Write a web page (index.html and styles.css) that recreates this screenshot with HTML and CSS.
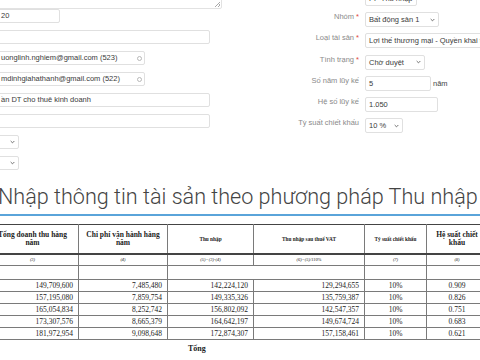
FILE: index.html
```html
<!DOCTYPE html>
<html lang="vi">
<head>
<meta charset="utf-8">
<title>Thu nhập</title>
<link rel="stylesheet" href="styles.css">
</head>
<body>
<div class="page">
  <div class="form">
    <div class="col-left">
      <div class="ta"><span class="grip"></span></div>
      <div class="fields">
        <div class="field w-s">20</div>
        <div class="field w-l"></div>
        <div class="field w-m email">uonglinh.nghiem@gmail.com (523)<span class="radio"></span></div>
        <div class="field w-m email">mdinhgiahathanh@gmail.com (522)<span class="radio"></span></div>
        <div class="field w-l">ần DT cho thuê kinh doanh</div>
        <div class="field w-l"></div>
        <div class="field sel w-xs"><span></span><svg class="chev" viewBox="0 0 6 4"><polyline points="0.8,0.8 3,3 5.2,0.8"/></svg></div>
        <div class="field sel w-xs"><span></span><svg class="chev" viewBox="0 0 6 4"><polyline points="0.8,0.8 3,3 5.2,0.8"/></svg></div>
      </div>
    </div>
    <div class="col-right">
      <label class="lbl">Phương pháp <b>*</b></label>
      <div class="field sel r-pp"><span>PP Thu nhập</span><svg class="chev" viewBox="0 0 6 4"><polyline points="0.8,0.8 3,3 5.2,0.8"/></svg></div>

      <label class="lbl">Nhóm <b>*</b></label>
      <div class="field sel r-nhom"><span>Bất động sản 1</span><svg class="chev" viewBox="0 0 6 4"><polyline points="0.8,0.8 3,3 5.2,0.8"/></svg></div>

      <label class="lbl">Loại tài sản <b>*</b></label>
      <div class="field r-loai">Lợi thế thương mại - Quyền khai thác</div>

      <label class="lbl">Tình trạng <b>*</b></label>
      <div class="field sel r-tt"><span>Chờ duyệt</span><svg class="chev" viewBox="0 0 6 4"><polyline points="0.8,0.8 3,3 5.2,0.8"/></svg></div>

      <label class="lbl">Số năm lũy kế</label>
      <div class="inline"><div class="field r-so">5</div><span class="unit">năm</span></div>

      <label class="lbl">Hệ số lũy kế</label>
      <div class="field r-he">1.050</div>

      <label class="lbl">Tỷ suất chiết khấu</label>
      <div class="field sel r-ty"><span>10 %</span><svg class="chev" viewBox="0 0 6 4"><polyline points="0.8,0.8 3,3 5.2,0.8"/></svg></div>
    </div>
  </div>

  <h1 class="title">Nhập thông tin tài sản theo phương pháp Thu nhập</h1>

  <table class="grid">
    <colgroup>
      <col class="c1"><col class="c2"><col class="c3"><col class="c4"><col class="c5"><col class="c6">
    </colgroup>
    <thead>
      <tr class="hd">
        <th>Tổng doanh thu hàng năm</th>
        <th>Chi phí vận hành hàng năm</th>
        <th class="sm">Thu nhập</th>
        <th class="sm">Thu nhập sau thuế VAT</th>
        <th class="sm">Tỷ suất chiết khấu</th>
        <th>Hệ suất chiết khấu</th>
      </tr>
      <tr class="idx">
        <td>(3)</td><td>(4)</td><td>(5)=(3)-(4)</td><td>(6)=(5)/110%</td><td>(7)</td><td>(8)</td>
      </tr>
    </thead>
    <tbody>
      <tr class="blank">
        <td></td><td></td><td colspan="2"></td><td></td><td></td>
      </tr>
      <tr class="data">
        <td>149,709,600</td><td>7,485,480</td><td>142,224,120</td><td>129,294,655</td><td class="ctr">10%</td><td class="ctr">0.909</td>
      </tr>
      <tr class="data">
        <td>157,195,080</td><td>7,859,754</td><td>149,335,326</td><td>135,759,387</td><td class="ctr">10%</td><td class="ctr">0.826</td>
      </tr>
      <tr class="data">
        <td>165,054,834</td><td>8,252,742</td><td>156,802,092</td><td>142,547,357</td><td class="ctr">10%</td><td class="ctr">0.751</td>
      </tr>
      <tr class="data">
        <td>173,307,576</td><td>8,665,379</td><td>164,642,197</td><td>149,674,724</td><td class="ctr">10%</td><td class="ctr">0.683</td>
      </tr>
      <tr class="data">
        <td>181,972,954</td><td>9,098,648</td><td>172,874,307</td><td>157,158,461</td><td class="ctr">10%</td><td class="ctr">0.621</td>
      </tr>
    </tbody>
  </table>
  <div class="total">Tổng</div>
</div>
</body>
</html>
```

FILE: styles.css
```css
* { box-sizing: border-box; }
html, body { margin: 0; padding: 0; background: #fff; }
body { width: 480px; height: 360px; overflow: hidden; font-family: "Liberation Sans", Arial, sans-serif; }
.page { width: 480px; }

.form { display: flex; align-items: flex-start; }

.col-left { width: 227px; margin-left: -6px; margin-top: -31px; display: flex; flex-direction: column; }
.ta { position: relative; width: 228px; height: 40px; border: 1px solid #e2e2e2; border-radius: 2px; }
.grip { position: absolute; right: 1px; bottom: 1px; width: 5px; height: 5px;
  background: linear-gradient(135deg, transparent 45%, #aaa 45%, #aaa 55%, transparent 55%, transparent 70%, #aaa 70%, #aaa 80%, transparent 80%); }
.fields { display: flex; flex-direction: column; gap: 7px; }

.field { height: 14px; border: 1px solid #e0e0e0; border-radius: 2px; background: #fff;
  font-size: 7.5px; line-height: 12px; color: #3a3a3a; padding: 0 3px 0 6px; white-space: nowrap; overflow: hidden; }
.w-s { width: 66px; }
.w-l { width: 216px; }
.w-m { width: 151px; }
.w-xs { width: 25px; }
.email { display: flex; align-items: center; justify-content: space-between; padding-right: 2px; }
.radio { width: 5px; height: 5px; border: 1px solid #b8b8b8; border-radius: 50%; flex: none; }

.sel { display: flex; align-items: center; justify-content: space-between; padding-right: 3px; }
.chev { width: 5px; height: 4px; flex: none; }
.chev polyline { fill: none; stroke: #555; stroke-width: 1; }

.col-right { margin-left: 28px; margin-top: -9px; display: grid; grid-template-columns: 110px auto;
  column-gap: 6px; row-gap: 6.2px; align-items: start; }
.col-right .field { height: 15px; line-height: 13px; padding-left: 3px; }
.lbl { font-size: 7.5px; line-height: 10px; color: #8a8a8a; text-align: right; white-space: nowrap; }
.lbl b { color: #e0463c; font-weight: normal; }
.r-pp { width: 52px; }
.r-nhom { width: 74px; }
.r-loai { width: 200px; }
.r-tt { width: 60px; }
.r-so { width: 66px; }
.r-he { width: 73px; }
.r-ty { width: 38px; }
.inline { display: flex; align-items: center; gap: 2px; }
.unit { font-size: 7.5px; color: #444; }

.title { margin: 15px 0 0 -2px; padding: 0 0 5px 0; font-family: Roboto, "Liberation Sans", sans-serif; font-weight: 300;
  font-size: 21.6px; line-height: 24px; color: #444; white-space: nowrap; border-bottom: 2px solid #5aa4da; width: 484px; }

.grid { margin: 8px 0 0 -14px; border-collapse: collapse; table-layout: fixed; width: 501px;
  font-family: "Liberation Serif", "Times New Roman", serif; color: #222; }
.c1 { width: 92px; } .c2 { width: 89px; } .c3 { width: 86px; } .c4 { width: 111px; } .c5 { width: 62px; } .c6 { width: 61px; }
.grid th, .grid td { border: 1px solid #7a7a7a; padding: 0; }
.grid thead tr:first-child th { border-top: 1px solid #444; }
.hd th { height: 29px; padding: 0 6px; font-size: 7.5px; line-height: 8px; font-weight: bold; color: #222; text-align: center; vertical-align: middle; border-bottom: 2px solid #444; }
.hd th.sm { font-size: 5.3px; padding: 0 2px; }
.idx td { height: 12px; font-size: 4.5px; font-style: italic; text-align: center; vertical-align: middle; }
.blank td { height: 14px; }
.data td { height: 12px; font-size: 7.5px; line-height: 10px; text-align: right; padding-right: 5px; vertical-align: middle; }
.data td.ctr { text-align: center; padding-right: 0; }
.data td:nth-child(5) { border-left-color: #d8d8d8; }
.total { padding: 4px 0 0 188px; font-family: "Liberation Serif", "Times New Roman", serif; font-weight: bold; font-size: 8px; color: #222; }
```
